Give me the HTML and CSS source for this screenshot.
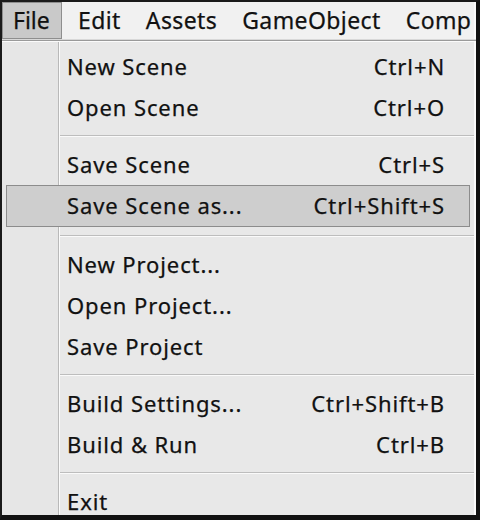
FILE: index.html
```html
<!DOCTYPE html>
<html>
<head>
<meta charset="utf-8">
<link rel="stylesheet" href="styles.css">
</head>
<body>
<div class="window">
  <div class="menubar">
    <span class="top-item active">File</span>
    <span class="top-item">Edit</span>
    <span class="top-item">Assets</span>
    <span class="top-item">GameObject</span>
    <span class="top-item">Comp</span>
  </div>
  <div class="bar-sep"></div>
  <div class="menu">
    <div class="row"><span class="label">New Scene</span><span class="key">Ctrl+N</span></div>
    <div class="row"><span class="label">Open Scene</span><span class="key">Ctrl+O</span></div>
    <div class="sep"></div>
    <div class="row"><span class="label">Save Scene</span><span class="key">Ctrl+S</span></div>
    <div class="row hl"><span class="label">Save Scene as...</span><span class="key">Ctrl+Shift+S</span></div>
    <div class="sep wide"></div>
    <div class="row"><span class="label">New Project...</span></div>
    <div class="row"><span class="label">Open Project...</span></div>
    <div class="row"><span class="label">Save Project</span></div>
    <div class="sep"></div>
    <div class="row"><span class="label">Build Settings...</span><span class="key">Ctrl+Shift+B</span></div>
    <div class="row"><span class="label">Build &amp; Run</span><span class="key">Ctrl+B</span></div>
    <div class="sep"></div>
    <div class="row"><span class="label">Exit</span></div>
  </div>
</div>
</body>
</html>
```
FILE: styles.css
```css
html, body {
  margin: 0;
  padding: 0;
  background: #111;
}
.window {
  width: 474px;
  height: 513px;
  border-top: 2px solid #1a1a1a;
  border-left: 2px solid #1a1a1a;
  border-right: 4px solid #111;
  border-bottom: 5px solid #111;
  background: #e8e8e8;
  font-family: "Noto Sans", "Open Sans", sans-serif;
  font-size: 22px;
  color: #111;
  -webkit-text-stroke: 0.25px #111;
  display: flex;
  flex-direction: column;
  overflow: hidden;
}
.menubar {
  flex-shrink: 0;
  height: 37px;
  background: #f1f1f1;
  display: flex;
  align-items: stretch;
  white-space: nowrap;
  border-right: 2px solid #fafafa;
  font-size: 23px;
  overflow: hidden;
}
.top-item {
  flex-shrink: 0;
  display: flex;
  align-items: center;
  padding: 0 12px 2px 13px;
  letter-spacing: 0.4px;
  box-sizing: border-box;
}
.top-item.active {
  background: #c9c9c9;
  border: 1px solid #8e8e8e;
  width: 60px;
  padding-left: 10px;
  padding-right: 0;
  margin-right: 3px;
  letter-spacing: 0;
}
.bar-sep {
  flex-shrink: 0;
  height: 1px;
  background: #9a9a9a;
  border-top: 1px solid #d8d8d8;
  border-bottom: 1px solid #fbfbfb;
}
.menu {
  flex-shrink: 0;
  padding-top: 4px;
  display: flex;
  flex-direction: column;
  background: linear-gradient(to right, #e6e6e6 0, #e6e6e6 56px, #b9b9b9 56px, #b9b9b9 57px, #fbfbfb 57px, #fbfbfb 58px, #e8e8e8 58px);
  border-right: 2px solid #fafafa;
}
.row {
  flex-shrink: 0;
  height: 41px;
  box-sizing: border-box;
  display: flex;
  align-items: center;
  justify-content: space-between;
  padding: 0 25px 2px 61px;
  letter-spacing: 0.9px;
  margin: 0 4px;
}
.row.hl {
  height: 42px;
  background: #cecece;
  border: 1px solid #8c8c8c;
  padding-left: 60px;
  padding-right: 24px;
}
.sep {
  flex-shrink: 0;
  height: 16px;
  box-sizing: border-box;
  margin-left: 58px;
  display: flex;
  flex-direction: column;
  justify-content: center;
}
.sep.wide {
  height: 17px;
}
.sep::before {
  content: "";
  display: block;
  height: 1px;
  background: #bdbdbd;
  border-bottom: 1px solid #fafafa;
}
```
